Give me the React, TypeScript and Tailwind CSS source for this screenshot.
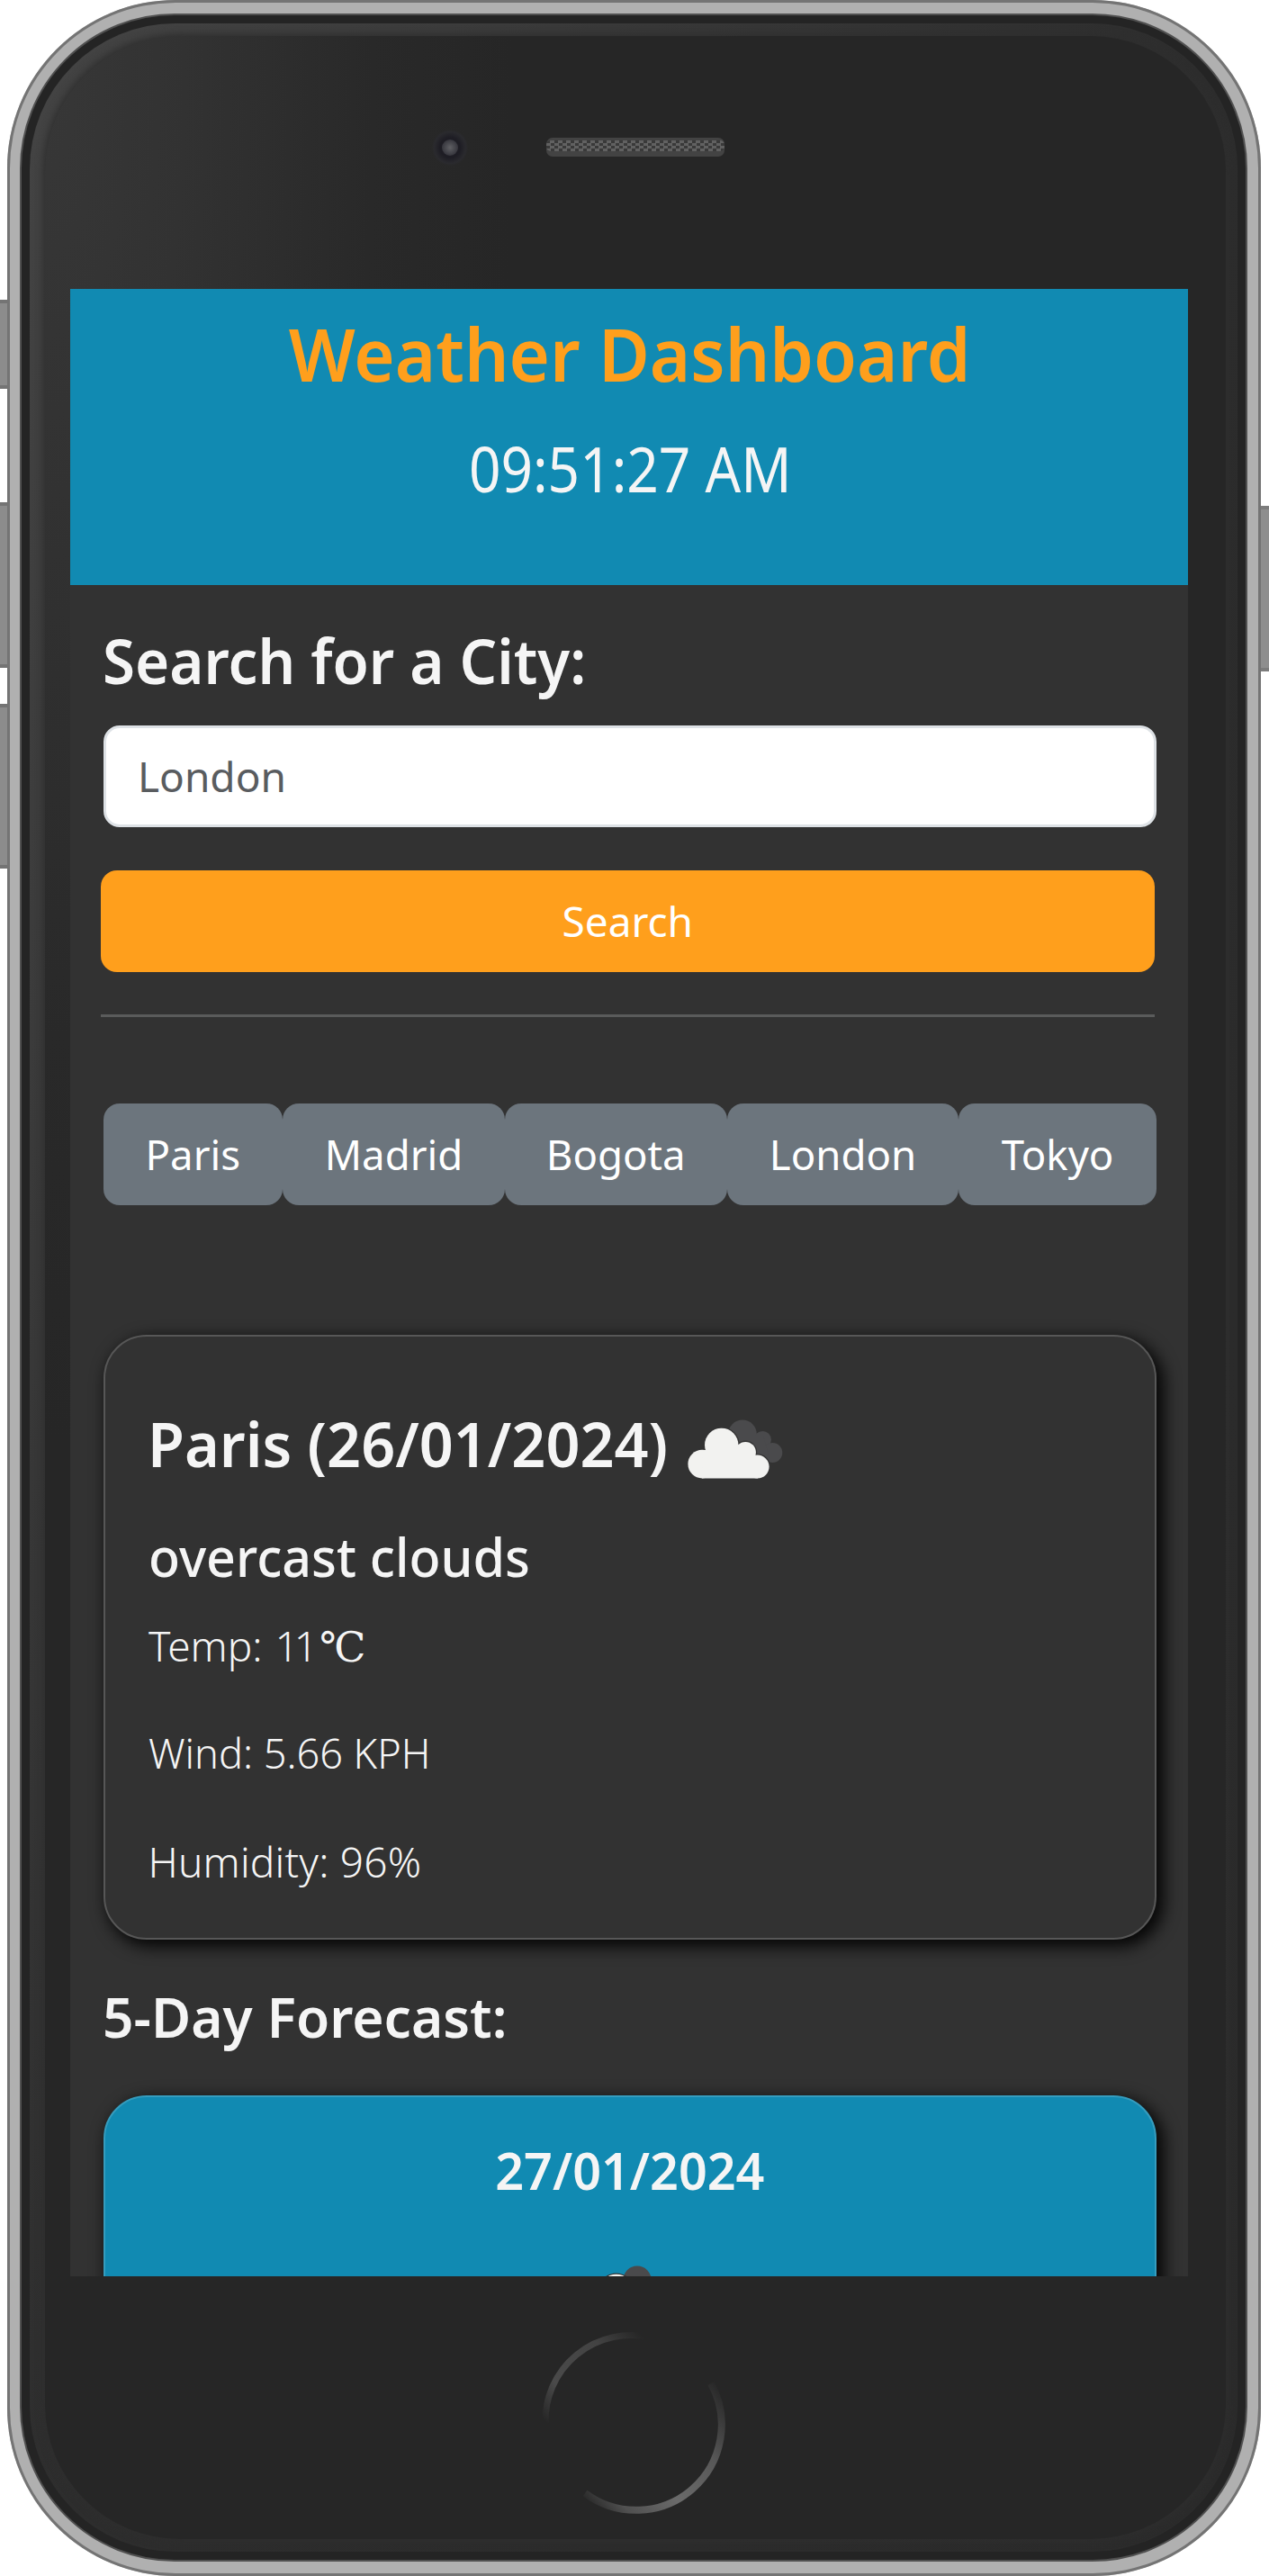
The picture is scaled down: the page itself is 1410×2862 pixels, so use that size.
import React from "react";

const cities = [
  { name: "Paris", width: "w-[199px]" },
  { name: "Madrid", width: "w-[247.5px]" },
  { name: "Bogota", width: "w-[246.5px]" },
  { name: "London", width: "w-[257px]" },
  { name: "Tokyo", width: "w-[220.5px]" },
];

function FrontCloud() {
  return (
    <>
      <circle cx="16.2" cy="49.6" r="15.8" />
      <circle cx="37.7" cy="28.4" r="18.7" />
      <circle cx="64.3" cy="36.5" r="11.6" />
      <circle cx="77.6" cy="52.6" r="13" />
      <path d="M16.2 34h7L38 26l18 5 10 8 8 5 4 21.4H16z" />
    </>
  );
}

function CloudIcon({ className }: { className: string }) {
  return (
    <svg className={className} width="106" height="67" viewBox="0 0 106 67" aria-hidden="true">
      <g fill="#4a4a4c">
        <circle cx="61" cy="16.3" r="15.8" />
        <circle cx="83.3" cy="22.6" r="9.6" />
        <circle cx="94.3" cy="37" r="11" />
        <path d="M60 18h24l8 28H70z" />
      </g>
      <g fill="#333333" stroke="#333333" strokeWidth="2.6">
        <FrontCloud />
      </g>
      <g fill="#f2f2f0">
        <FrontCloud />
      </g>
    </svg>
  );
}

function HomeButton() {
  return (
    <svg width="210" height="210" viewBox="0 0 210 210" fill="none" aria-hidden="true">
      <defs>
        <linearGradient id="upperArc" gradientUnits="userSpaceOnUse" x1="8" y1="102" x2="116" y2="8">
          <stop offset="0" stopColor="#262626" />
          <stop offset="0.25" stopColor="#4a4a4a" />
          <stop offset="0.7" stopColor="#434343" />
          <stop offset="1" stopColor="#262626" />
        </linearGradient>
        <linearGradient id="lowerArc" gradientUnits="userSpaceOnUse" x1="200" y1="60" x2="50" y2="190">
          <stop offset="0" stopColor="#262626" />
          <stop offset="0.3" stopColor="#585858" />
          <stop offset="0.6" stopColor="#6a6a6a" />
          <stop offset="0.85" stopColor="#505050" />
          <stop offset="1" stopColor="#262626" />
        </linearGradient>
      </defs>
      <path d="M10 106A95 95 0 0 1 126 11" stroke="url(#upperArc)" strokeWidth="7" />
      <path d="M194 62A95 95 0 0 1 54 184" stroke="url(#lowerArc)" strokeWidth="8" />
    </svg>
  );
}

function Header() {
  return (
    <header className="flex h-[329px] flex-col items-center bg-[#118ab2] pt-[23px] pl-[2px]">
      <h1 className="scale-x-[0.96] text-[81px] leading-[97px] font-semibold whitespace-nowrap text-[#ff9f1c]">
        Weather Dashboard
      </h1>
      <p className="mt-[38px] scale-x-[0.9] text-[69px] leading-[82px] whitespace-nowrap">09:51:27 AM</p>
    </header>
  );
}

function SearchForm() {
  return (
    <form className="flex flex-col">
      <h2 className="mt-[42.5px] -ml-[1px] origin-left scale-x-[0.962] text-[68px] leading-[82px] font-semibold whitespace-nowrap">
        Search for a City:
      </h2>
      <input
        className="mt-[31px] h-[113.5px] w-full rounded-[18px] border-[3px] border-[#dee2e6] bg-white pl-[35.5px] text-[46px] text-[#595c5f] placeholder:text-[#595c5f] placeholder:opacity-100"
        placeholder="London"
      />
      <button
        type="button"
        className="mt-[47.5px] -ml-[3px] h-[113px] w-[1171.5px] rounded-[18px] bg-[#ff9f1c] text-[46px] text-white"
      >
        <span className="inline-block font-[430]">Search</span>
      </button>
      <hr className="mt-[47.5px] -ml-[3px] h-[3px] w-[1171.5px] border-0 bg-[#5a5b5b]" />
    </form>
  );
}

function CityButtons() {
  return (
    <div className="mt-[96px] flex h-[113px]">
      {cities.map((city) => (
        <button
          key={city.name}
          type="button"
          className={`${city.width} shrink-0 rounded-[18px] bg-[#6c757d] text-[46px] font-[430] text-white`}
        >
          <span className="inline-block scale-x-[0.99]">{city.name}</span>
        </button>
      ))}
    </div>
  );
}

function TodayCard() {
  return (
    <section className="mt-[144px] h-[672px] rounded-[48px] border-2 border-[#575757] bg-[#323232] pl-[46.5px] shadow-[6px_6px_18px_2px_rgba(0,0,0,0.9)]">
      <div className="mt-[77.5px] flex items-start gap-[9px]">
        <h2 className="ml-[1px] origin-left scale-x-[0.978] text-[68px] leading-[82px] font-semibold whitespace-nowrap">
          Paris (26/01/2024)
        </h2>
        <CloudIcon className="mt-[14px] shrink-0" />
      </div>
      <h3 className="mt-[49.5px] ml-[1.5px] origin-left scale-x-[0.972] text-[59px] leading-[70px] font-medium">
        overcast clouds
      </h3>
      <p className="mt-[33.5px] ml-[2px] text-[46px] leading-[60px] font-[320] whitespace-nowrap">
        <span className="inline-block w-[191px] origin-left">
          Temp: <span className="ml-[2px] tracking-[-5px]">11</span>
        </span>{" "}
        <span className="-ml-[13px] font-['DejaVu_Serif'] leading-none">℃</span>
      </p>
      <p className="mt-[59.5px] ml-[2px] origin-left scale-x-[0.98] text-[46px] leading-[60px] font-[320]">
        Wind: 5.66 KPH
      </p>
      <p className="mt-[60.5px] ml-[1.5px] text-[46px] leading-[60px] font-[320] tracking-[0.2px]">Humidity: 96%</p>
    </section>
  );
}

function Forecast() {
  return (
    <section>
      <h2 className="mt-[47.5px] -ml-[1px] origin-left scale-x-[0.975] text-[62px] leading-[75px] font-semibold whitespace-nowrap">
        5-Day Forecast:
      </h2>
      <div className="mt-[50.5px] flex h-[700px] flex-col items-center rounded-[48px] border-2 border-[#359cbe] bg-[#118ab2] shadow-[6px_6px_18px_2px_rgba(0,0,0,0.9)]">
        <h3 className="mt-[46px] scale-x-[0.96] text-[58px] leading-[70px] font-semibold">27/01/2024</h3>
        <CloudIcon className="mt-[71px] shrink-0" />
      </div>
    </section>
  );
}

export default function App() {
  return (
    <div className="relative h-[2862px] w-[1410px] overflow-hidden bg-white font-['Noto_Sans',sans-serif] text-[#f5f5f5]">
      <div className="absolute top-[333px] left-0 h-[99px] w-[20px] border-y-4 border-[#747474] bg-[#8c8c8c]" />
      <div className="absolute top-[558px] left-0 h-[184px] w-[20px] border-y-4 border-[#747474] bg-[#8c8c8c]" />
      <div className="absolute top-[782px] left-0 h-[183px] w-[20px] border-y-4 border-[#747474] bg-[#8c8c8c]" />
      <div className="absolute top-[562px] right-0 h-[184px] w-[20px] border-y-4 border-[#7c7c7c] bg-[#8e8e8e]" />

      <div className="relative ml-[8px] h-[2862px] w-[1393px] rounded-[187px] bg-[#b0b0b0] pt-[15px] pr-[15px] pb-[16px] pl-[14px] shadow-[inset_0_0_0_3px_#747474]">
        <div className="h-full rounded-[172px] border-2 border-[#505050] bg-[#242424] p-[9px]">
          <div className="h-full rounded-[162px] bg-[linear-gradient(115deg,#444444_0%,#3a3a3a_22%,#2d2d2d_50%,#2b2b2b_100%)] pt-[14px] pr-[13px] pb-[14px] pl-[17px]">
            <div className="h-full rounded-[150px] bg-[#262626] bg-[radial-gradient(ellipse_520px_1500px_at_0_60px,#373737_0%,#323232_30%,#292929_70%,#262626_100%)] shadow-[0_0_8px_2px_#2e2e2e]">
              <div className="flex h-[281px] items-start">
                <div className="mt-[104px] ml-[430px] flex size-[40px] items-center justify-center rounded-full bg-[radial-gradient(circle,#1e1d24_40%,#2a2a2e_62%,transparent_72%)]">
                  <div className="size-[18px] rounded-full bg-[radial-gradient(circle,#606064_0%,#45454b_45%,#2b2a32_90%)]" />
                </div>
                <div className="mt-[113px] ml-[87px] h-[21px] w-[198px] rounded-[7px] bg-[#434343] pt-[3px]">
                  <div className="h-[12px] rounded-[5px] bg-[repeating-conic-gradient(#616161_0_25%,#393939_0_50%)] bg-size-[9px_6px]" />
                </div>
              </div>
              <main className="ml-[28px] h-[2208px] w-[1242px] overflow-hidden bg-[#323232]">
                <Header />
                <div className="ml-[36.5px] w-[1170.5px]">
                  <SearchForm />
                  <CityButtons />
                  <TodayCard />
                  <Forecast />
                </div>
              </main>
              <div className="mt-[57px] ml-[546px]">
                <HomeButton />
              </div>
            </div>
          </div>
        </div>
      </div>
    </div>
  );
}
